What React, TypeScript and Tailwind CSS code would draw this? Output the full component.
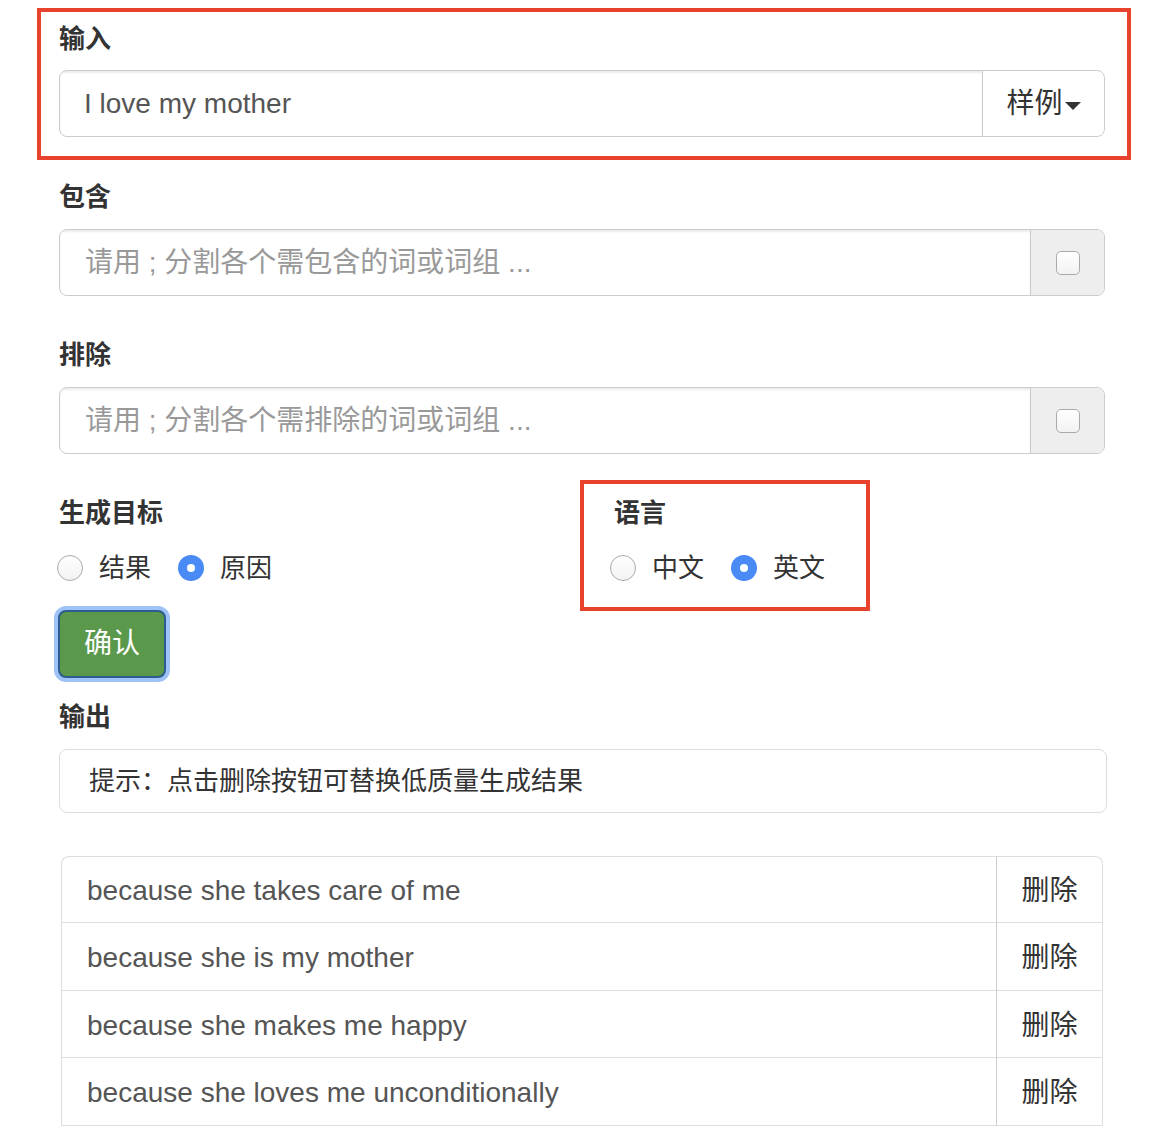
import { useState } from "react";

const FONT = { fontFamily: '"Liberation Sans", "Noto Sans CJK SC", sans-serif' };

const results = [
    { text: "because she takes care of me", h: "h-[66px]" },
    { text: "because she is my mother", h: "h-[68px]" },
    { text: "because she makes me happy", h: "h-[67px]" },
    { text: "because she loves me unconditionally", h: "h-[68px]" },
];

// Radio dot styled like the Chrome/mac native one
function Radio({ checked }: { checked: boolean }) {
    return checked ? (
        <span className="flex items-center justify-center w-[26px] h-[26px] rounded-full bg-[#4a8af4] shrink-0">
            <span className="w-[8px] h-[8px] rounded-full bg-white" />
        </span>
    ) : (
        <span className="w-[26px] h-[26px] rounded-full border border-[#aaa] bg-gradient-to-b from-white to-[#f3f3f3] shrink-0" />
    );
}

function RadioGroup({ options, value }: { options: string[]; value: string }) {
    return (
        <div className="flex items-center h-[36px]">
            {options.map((o, i) => (
                <div key={o} className={`flex items-center ${i > 0 ? "ml-[27px]" : ""}`}>
                    <Radio checked={o === value} />
                    <span className="ml-[16px] text-[26px] text-[#333] leading-none">{o}</span>
                </div>
            ))}
        </div>
    );
}

function Label({ children }: { children: React.ReactNode }) {
    return <div className="h-[36px] leading-[36px] text-[26px] font-bold text-[#333]">{children}</div>;
}

function FilterInput({ placeholder }: { placeholder: string }) {
    const [on, setOn] = useState(false);
    return (
        <div className="flex h-[67px] w-[1046px] border border-[#ccc] rounded-[8px] overflow-hidden">
            <div className="flex-1 flex items-center pl-[25px] text-[28px] text-[#999] shadow-[inset_0_2px_2px_rgba(0,0,0,0.075)]">
                {placeholder}
            </div>
            <div className="w-[74px] border-l border-[#ccc] bg-[#eee] flex items-center justify-center">
                <button
                    onClick={() => setOn(!on)}
                    className="w-[24px] h-[24px] rounded-[5px] border border-[#aaa] bg-gradient-to-b from-white to-[#f2f2f2]"
                >
                    {on ? "✓" : ""}
                </button>
            </div>
        </div>
    );
}

export default function App() {
    return (
        <div className="min-h-[1128px] bg-white overflow-hidden" style={FONT}>
            {/* input group, highlighted */}
            <div className="mt-[8px] ml-[37px] w-[1094px] h-[152px] border-4 border-[#e8412c] pt-[9px] pl-[18px]">
                <Label>输入</Label>
                <div className="mt-[13px] flex h-[67px] w-[1046px] border border-[#ccc] rounded-[8px] overflow-hidden">
                    <div className="flex-1 flex items-center pl-[24px] text-[28px] text-[#555] shadow-[inset_0_2px_2px_rgba(0,0,0,0.075)]">
                        I love my mother
                    </div>
                    <div className="w-[122px] border-l border-[#ccc] flex items-center justify-center text-[28px] text-[#333]">
                        样例
                        <span className="ml-[2px] mt-[4px] w-0 h-0 border-t-[8px] border-t-[#333] border-x-[8px] border-x-transparent" />
                    </div>
                </div>
            </div>

            <div className="ml-[59px]">
                <div className="mt-[19px]">
                    <Label>包含</Label>
                </div>
                <div className="mt-[14px]">
                    <FilterInput placeholder="请用 ; 分割各个需包含的词或词组 ..." />
                </div>

                <div className="mt-[41px]">
                    <Label>排除</Label>
                </div>
                <div className="mt-[14px]">
                    <FilterInput placeholder="请用 ; 分割各个需排除的词或词组 ..." />
                </div>

                <div className="mt-[26px] flex">
                    <div className="w-[523px] pt-[15px] -ml-[2px]">
                        <div className="ml-[2px]">
                            <Label>生成目标</Label>
                        </div>
                        <div className="mt-[19px]">
                            <RadioGroup options={["结果", "原因"]} value="原因" />
                        </div>
                    </div>
                    <div className="w-[290px] h-[131px] border-4 border-[#e8412c] pt-[11px] pl-[26px]">
                        <div className="ml-[4px]">
                            <Label>语言</Label>
                        </div>
                        <div className="mt-[19px]">
                            <RadioGroup options={["中文", "英文"]} value="英文" />
                        </div>
                    </div>
                </div>

                <button className="-mt-[1px] -ml-[1px] block w-[108px] h-[68px] rounded-[8px] bg-[#5a994c] border-2 border-[#2d5c8f] text-white text-[28px] shadow-[0_0_0_4px_#9fc2f7]">
                    确认
                </button>

                <div className="mt-[21px]">
                    <Label>输出</Label>
                </div>
                <div className="mt-[14px] w-[1048px] h-[64px] border border-[#ddd] rounded-[8px] flex items-center pl-[29px] text-[26px] text-[#333]">
                    提示：点击删除按钮可替换低质量生成结果
                </div>

                <div className="mt-[43px] ml-[2px] w-[1042px] border-t border-x border-[#ddd] rounded-t-[8px] overflow-hidden">
                    {results.map((r) => (
                        <div key={r.text} className={`flex border-b border-[#ddd] ${r.h}`}>
                            <div className="flex-1 flex items-center pl-[25px] pt-[3px] text-[28px] text-[#555]">{r.text}</div>
                            <div className="w-[106px] border-l border-[#ccc] flex items-center justify-center pt-[3px] text-[28px] text-[#333]">
                                删除
                            </div>
                        </div>
                    ))}
                </div>
            </div>
        </div>
    );
}
